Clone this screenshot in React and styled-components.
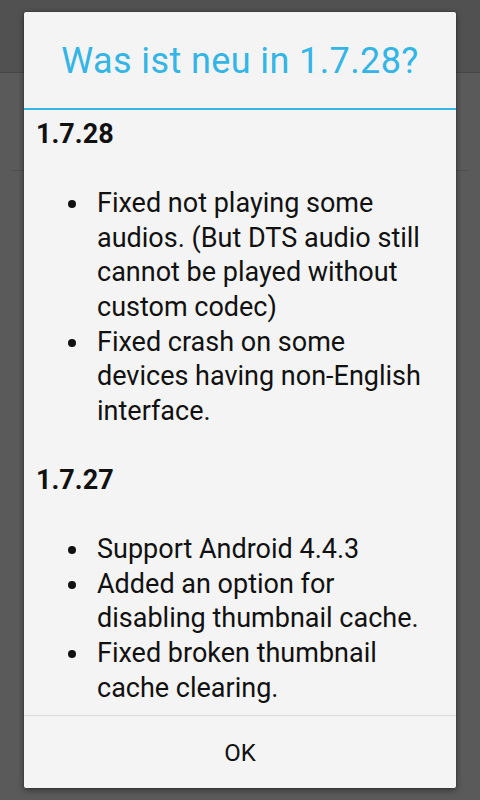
import React from 'react';
import styled, { createGlobalStyle } from 'styled-components';

const GlobalStyle = createGlobalStyle`
  html, body {
    margin: 0;
    padding: 0;
    background: #585858;
  }
  body {
    font-family: Roboto, "Noto Sans", "Liberation Sans", sans-serif;
  }
`;

const Screen = styled.div`
  position: relative;
  width: 480px;
  height: 800px;
  overflow: hidden;
  background: #5a5a5a;
  display: flex;
  flex-direction: column;
`;

const AppBar = styled.div`
  height: 72px;
  background: #515151;
  border-bottom: 1px solid #464646;
`;

const ListRow = styled.div`
  height: 97px;
  margin: 0 12px;
  border-bottom: 1px solid #4d4d4d;
`;

const Dialog = styled.div`
  position: absolute;
  top: 12px;
  left: 24px;
  width: 432px;
  height: 776px;
  background: #f4f4f4;
  border-radius: 2px;
  box-shadow: 0 2px 6px rgba(0, 0, 0, 0.45), 0 0 2px rgba(0, 0, 0, 0.35);
  display: flex;
  flex-direction: column;
  overflow: hidden;
`;

const TitleBar = styled.div`
  height: 96px;
  display: flex;
  align-items: center;
  justify-content: center;
  border-bottom: 2px solid #33b5e5;
`;

const Title = styled.h1`
  margin: 0;
  font-size: 36px;
  font-weight: 400;
  color: #33b5e5;
  letter-spacing: 0.4px;
  padding-top: 1px;
`;

const Content = styled.div`
  flex: 1;
  overflow: hidden;
  padding: 7px 20px 0 12px;
  font-size: 27px;
  line-height: 34.6px;
  color: #111;
`;

const Version = styled.div`
  font-weight: 700;
`;

const Changes = styled.ul`
  list-style: none;
  margin: 34.6px 0;
  padding: 0 0 0 61px;
`;

const Change = styled.li`
  position: relative;
  &::before {
    content: '';
    position: absolute;
    left: -29px;
    top: 14px;
    width: 8px;
    height: 8px;
    border-radius: 50%;
    background: #111;
  }
`;

const ButtonBar = styled.div`
  height: 72px;
  border-top: 1px solid #dadada;
  display: flex;
`;

const Button = styled.button`
  flex: 1;
  border: none;
  background: transparent;
  font-family: inherit;
  font-size: 24px;
  color: #111;
  padding: 2px 0 0;
`;

const releases = [
  {
    version: '1.7.28',
    changes: [
      'Fixed not playing some audios. (But DTS audio still cannot be played without custom codec)',
      'Fixed crash on some devices having non-English interface.',
    ],
  },
  {
    version: '1.7.27',
    changes: [
      'Support Android 4.4.3',
      'Added an option for disabling thumbnail cache.',
      'Fixed broken thumbnail cache clearing.',
    ],
  },
];

export default function App() {
  return (
    <>
      <GlobalStyle />
      <Screen>
        <AppBar />
        <ListRow />
        <Dialog>
          <TitleBar>
            <Title>Was ist neu in 1.7.28?</Title>
          </TitleBar>
          <Content>
            {releases.map((r) => (
              <section key={r.version}>
                <Version>{r.version}</Version>
                <Changes>
                  {r.changes.map((c) => (
                    <Change key={c}>{c}</Change>
                  ))}
                </Changes>
              </section>
            ))}
          </Content>
          <ButtonBar>
            <Button>OK</Button>
          </ButtonBar>
        </Dialog>
      </Screen>
    </>
  );
}
